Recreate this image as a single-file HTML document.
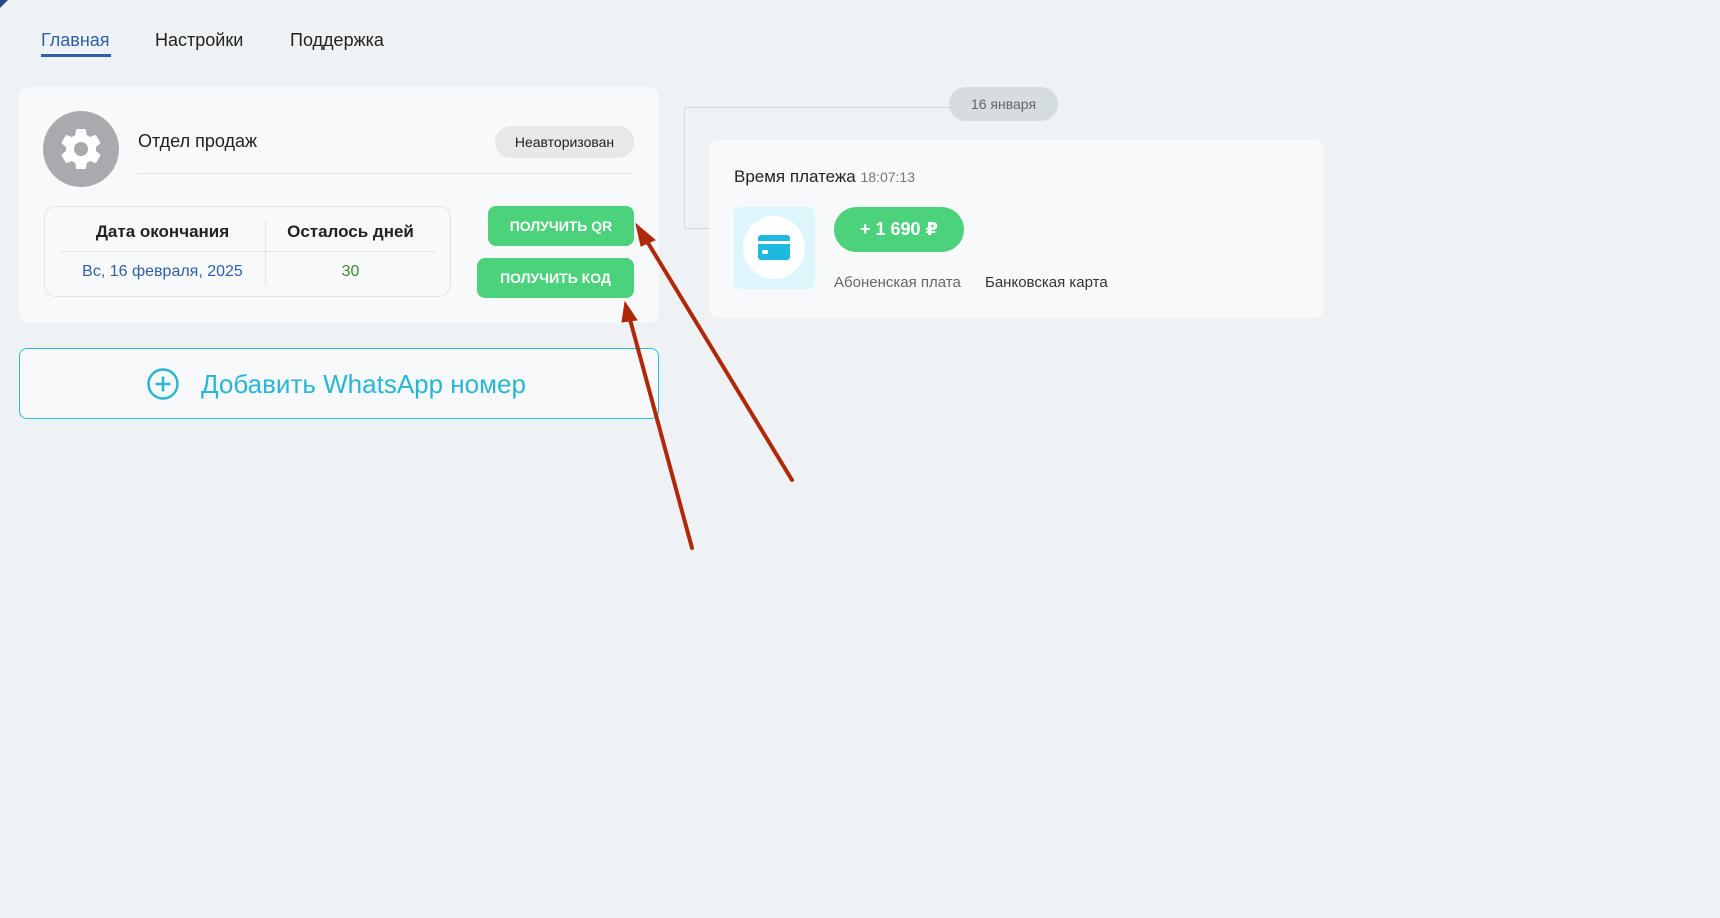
<!DOCTYPE html>
<html><head><meta charset="utf-8"><style>
*{box-sizing:border-box;margin:0;padding:0}
body{width:1720px;height:918px;background:#eef2f4;font-family:"Liberation Sans","DejaVu Sans",sans-serif;position:relative;overflow:hidden;color:#222}
.a{position:absolute}
.tab{font-size:18px;top:30px;color:#222}
.card{background:#f8f9fb;border-radius:10px}
.btn{background:#4bd27a;color:#fff;font-weight:bold;font-size:14px;border-radius:8px;display:flex;align-items:center;justify-content:center}
</style></head><body>
<div class="a" style="left:0;top:0;width:0;height:0;border-top:8px solid #2b4a8a;border-right:8px solid transparent"></div>
<div class="a tab" style="left:41px;color:#2f5fa8">Главная</div>
<div class="a" style="left:41px;top:54px;width:70px;height:3px;background:#2f5fa8"></div>
<div class="a tab" style="left:155px">Настройки</div>
<div class="a tab" style="left:290px">Поддержка</div>

<div class="a card" style="left:19px;top:87px;width:640px;height:236px"></div>
<div class="a" style="left:43px;top:111px;width:76px;height:76px;border-radius:50%;background:#a9aaad"></div>
<svg class="a" style="left:57px;top:125px" width="48" height="48" viewBox="0 0 24 24"><path fill="#fff" d="M19.4 13c.04-.33.06-.66.06-1s-.02-.67-.06-1l2.1-1.65c.2-.15.24-.42.12-.64l-2-3.460c-.12-.22-.39-.3-.61-.22l-2.49 1c-.52-.4-1.080-.73-1.69-.98l-.38-2.65A.49.49 0 0 0 14 2h-4c-.25 0-.46.18-.49.42l-.38 2.65c-.61.25-1.17.59-1.69.98l-2.49-1c-.23-.09-.49 0-.61.22l-2 3.46c-.13.22-.07.49.12.64L4.57 11c-.04.33-.07.67-.07 1s.03.67.07 1l-2.11 1.65c-.19.15-.24.42-.12.64l2 3.46c.12.22.39.3.61.22l2.49-1c.52.4 1.08.73 1.69.98l.38 2.65c.03.24.24.42.49.42h4c.25 0 .46-.18.49-.42l.38-2.65c.61-.25 1.17-.59 1.690-.98l2.49 1c.23.09.49 0 .61-.22l2-3.46c.12-.22.07-.49-.12-.64L19.4 13zM12 15.5A3.5 3.5 0 1 1 12 8.5a3.5 3.5 0 0 1 0 7z"/></svg>
<div class="a" style="left:138px;top:131px;font-size:18px">Отдел продаж</div>
<div class="a" style="left:495px;top:126px;width:139px;height:32px;border-radius:16px;background:#e6e8ea;font-size:14px;display:flex;align-items:center;justify-content:center">Неавторизован</div>
<div class="a" style="left:138px;top:173px;width:496px;height:1px;background:#e2e5e8"></div>

<div class="a" style="left:44px;top:206px;width:407px;height:91px;border:1px solid #e2e5e8;border-radius:12px"></div>
<div class="a" style="left:60px;top:251px;width:376px;height:1px;background:#e2e5e8"></div>
<div class="a" style="left:265px;top:220px;width:1px;height:65px;background:#e2e5e8"></div>
<div class="a" style="left:60px;top:222px;width:205px;text-align:center;font-weight:bold;font-size:17px">Дата окончания</div>
<div class="a" style="left:265px;top:222px;width:171px;text-align:center;font-weight:bold;font-size:17px">Осталось дней</div>
<div class="a" style="left:60px;top:263px;width:205px;text-align:center;font-size:16px;color:#2f5fa8">Вс, 16 февраля, 2025</div>
<div class="a" style="left:265px;top:263px;width:171px;text-align:center;font-size:16px;color:#3a8a2e">30</div>
<div class="a btn" style="left:488px;top:206px;width:146px;height:40px">ПОЛУЧИТЬ QR</div>
<div class="a btn" style="left:477px;top:258px;width:157px;height:40px">ПОЛУЧИТЬ КОД</div>

<div class="a" style="left:19px;top:348px;width:640px;height:71px;border:1px solid #2bbcd8;border-radius:8px;background:#f8f9fb"></div>
<svg class="a" style="left:147px;top:368px" width="32" height="32" viewBox="0 0 32 32"><circle cx="16" cy="16" r="14.5" fill="none" stroke="#29b6d6" stroke-width="2.5"/><path d="M16 8.5v15M8.5 16h15" stroke="#29b6d6" stroke-width="2.5"/></svg>
<div class="a" style="left:201px;top:369px;font-size:26px;color:#29b6d6">Добавить WhatsApp номер</div>

<div class="a" style="left:684px;top:107px;width:270px;height:122px;border:1px solid #d3dadd;border-right:none"></div>
<div class="a" style="left:949px;top:87px;width:109px;height:34px;border-radius:17px;background:#d5dde1;color:#666;font-size:14px;display:flex;align-items:center;justify-content:center">16 января</div>
<div class="a card" style="left:709px;top:140px;width:615px;height:178px"></div>
<div class="a" style="left:734px;top:167px;font-size:17px">Время платежа <span style="font-size:14px;color:#777">18:07:13</span></div>
<div class="a" style="left:734px;top:207px;width:81px;height:82px;border-radius:6px;background:#ddf6fc"></div>
<div class="a" style="left:743px;top:216px;width:62px;height:63px;border-radius:50%;background:#fff"></div>
<svg class="a" style="left:757px;top:233px" width="34" height="30" viewBox="0 0 34 30"><rect x="1" y="2" width="32" height="25" rx="3" fill="#1fb8e0"/><rect x="1" y="8" width="32" height="3" fill="#fff"/><rect x="5" y="17" width="6" height="4" rx="1" fill="#fff"/></svg>
<div class="a" style="left:834px;top:207px;width:130px;height:45px;border-radius:23px;background:#4bd27a;color:#fff;font-weight:bold;font-size:18px;display:flex;align-items:center;justify-content:center">+ 1 690 ₽</div>
<div class="a" style="left:834px;top:274px;font-size:15px;color:#666">Абоненская плата</div>
<div class="a" style="left:985px;top:274px;font-size:15px;color:#333">Банковская карта</div>

<svg class="a" style="left:0;top:0" width="1720" height="918"><g stroke="#b0280a" stroke-width="4" fill="#b0280a" stroke-linecap="round">
<line x1="792" y1="480" x2="642" y2="233"/><polygon points="636,224 655,240 641,246" stroke-width="1"/>
<line x1="692" y1="548" x2="628" y2="312"/><polygon points="625,302 637,320 622,322" stroke-width="1"/>
</g></svg>
</body></html>
